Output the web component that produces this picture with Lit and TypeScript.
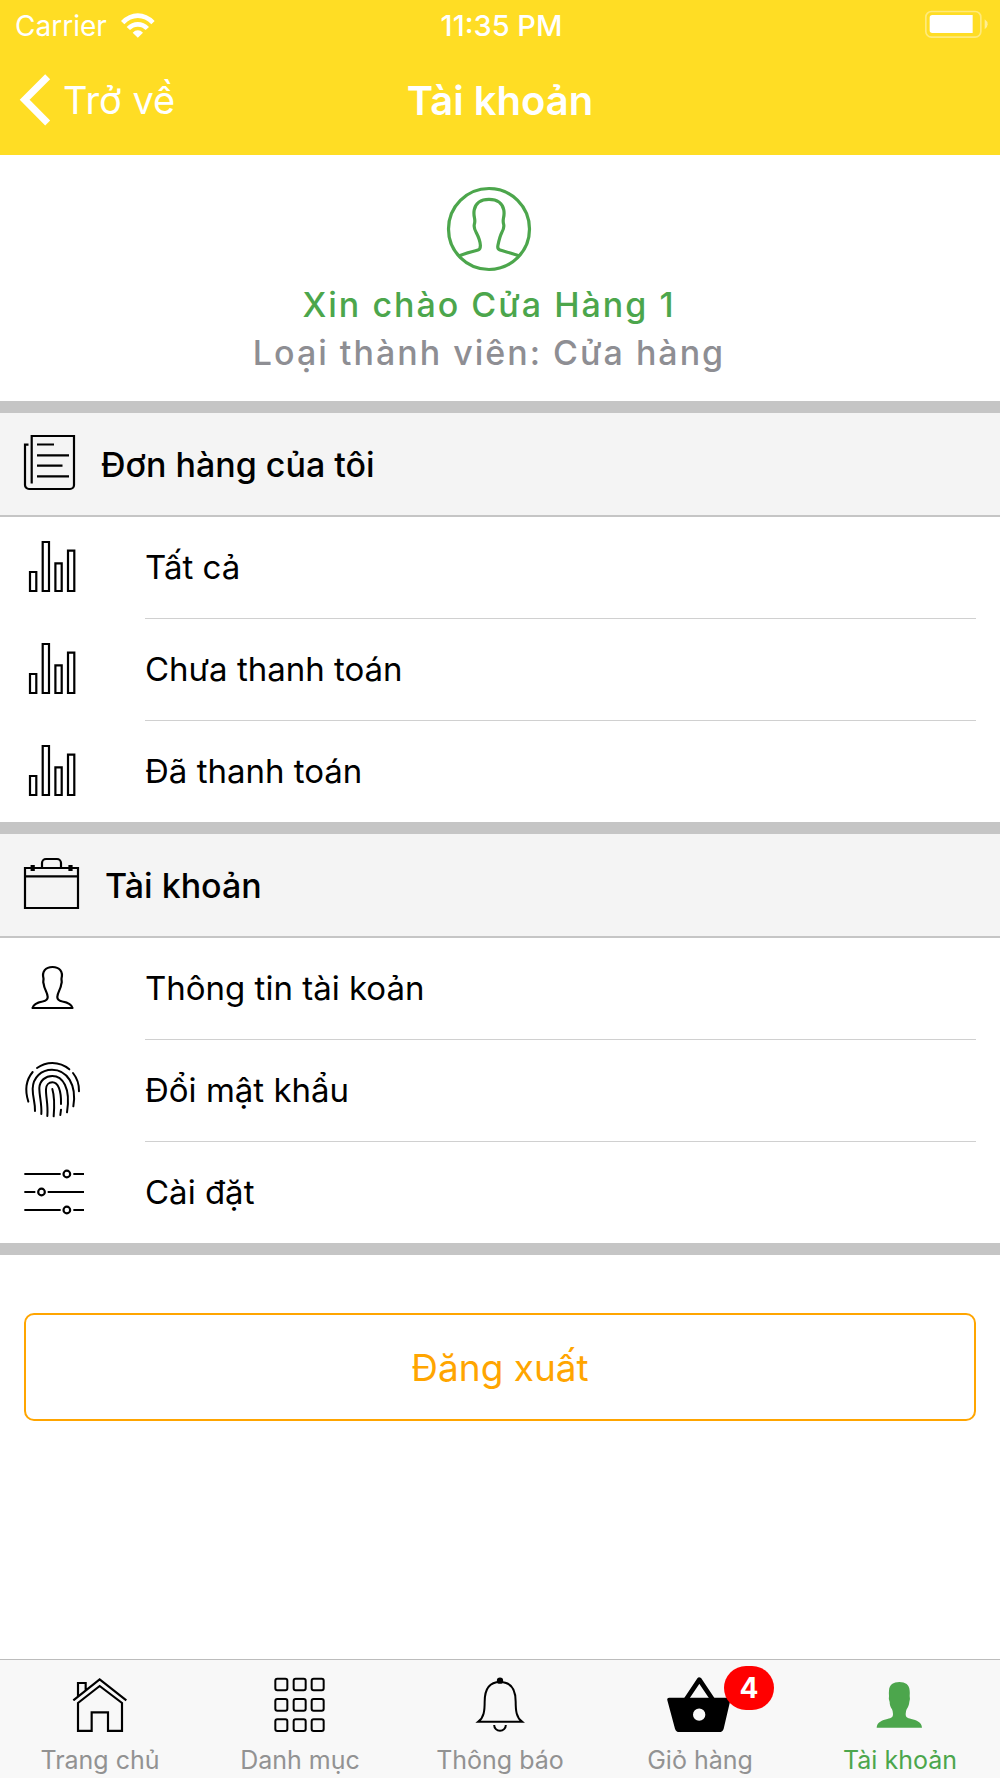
import { LitElement, html, css, svg, type TemplateResult } from "lit";
import { customElement, property } from "lit/decorators.js";

type IconName =
  | "avatar" | "orders" | "bars" | "briefcase" | "person" | "fingerprint" | "sliders"
  | "home" | "grid" | "bell" | "basket" | "personFilled" | "wifi" | "battery" | "chevron";

interface IconDef {
  width: number;
  height: number;
  box: string;
  body: TemplateResult;
}

const gridCells = [113, 174, 235].flatMap((y) => [823, 878, 932].map((x) => ({ x, y })));

const ICONS: Record<IconName, IconDef> = {
  avatar: {
    width: 84, height: 84, box: "0 0 84 84",
    body: svg`<g fill="none" stroke="currentColor" stroke-width="3.200">
      <circle cx="42" cy="42" r="40.5"/>
      <path stroke-linejoin="round" d="M12.500 68.800C18 66 25.500 64.800 31 63C33 62.300 33.400 61 33.400 58.500C33.200 53 31 49 29.200 45.500C27.500 42.500 26.800 40 27.300 37.500C28.100 35 28 33.500 27.500 31C26.900 28.500 26.700 26 27.200 23C28.300 16.500 33.500 12.300 42 12.300C50.500 12.300 55.700 16.500 56.800 23C57.300 26 57.100 28.500 56.500 31C56 33.500 55.900 35 56.700 37.500C57.200 40 56.500 42.500 54.800 45.500C53 49 51.800 54 50.900 58.500C50.400 61 51 62.300 53 63C58.500 64.800 66 66.500 71.500 68.800"/>
    </g>`,
  },
  orders: {
    width: 51, height: 55, box: "0 0 51 55",
    body: svg`<path fill="none" stroke="currentColor" stroke-width="2.200" d="M7.700 48.500V1H50V50a4 4 0 0 1-4 4H5a4 4 0 0 1-4-4V9.700H4.500M13 9.500H30M13 20.300H45M13 30.700H38.500M13 41.300H45"/>`,
  },
  bars: {
    width: 47, height: 51, box: "0 0 47 51",
    body: svg`<path fill="none" stroke="currentColor" stroke-width="2.200" d="M1 31H7.300V50H1ZM13.700 1H20V50H13.700ZM26.400 22.300H32.700V50H26.400ZM39 9.700H45.300V50H39Z"/>`,
  },
  briefcase: {
    width: 55, height: 51, box: "0 0 55 51",
    body: svg`<path fill="none" stroke="currentColor" stroke-width="2.200" d="M1 10H54V50H1ZM1 18.300H54M18 10V5a4 4 0 0 1 4-4H33a4 4 0 0 1 4 4V10"/>
      <path fill="currentColor" d="M6.600 7H10.800V13H6.600ZM44.400 7H48.600V13H44.400Z"/>`,
  },
  person: {
    width: 43, height: 43, box: "0 0 43 43",
    body: svg`<path fill="none" stroke="currentColor" stroke-width="2.200" stroke-linejoin="round" d="M1.500 42H41.500C40.500 38 35.500 36.200 31.500 35.500C28 34.800 26.300 34 26.300 31C26.300 26.500 30 23 30.300 18C31.400 15.500 30.300 15 30.500 12.500C32.300 5.500 28.500 1 21.500 1C14.500 1 10.700 5.500 12.500 12.500C12.700 15 11.600 15.500 12.700 18C13 23 16.700 26.500 16.700 31C16.700 34 15 34.800 11.500 35.500C7.500 36.200 2.500 38 1.500 42Z"/>`,
  },
  fingerprint: {
    width: 57, height: 57, box: "72 121 171 171",
    body: svg`<g fill="none" stroke="currentColor" stroke-width="6" stroke-linecap="round">
      <path d="M111 142Q132 127 157 127Q186 127 208 146"/>
      <path d="M98 154Q68 190 85 243"/>
      <path d="M219 157Q238 181 237 212"/>
      <path d="M105 271C106 246 98 232 98 204C99 170 124 147 156 147C201 147 231 192 220 257"/>
      <path d="M124 280C126 250 118 228 118 202C119 179 137 166 157 166C187 166 213 200 201 275"/>
      <path d="M142 286C145 250 137 228 138 206C138 192 147 185 157 185C174 185 184 208 183 250"/>
      <path d="M183 267L181 283"/>
      <path d="M157 205C163 225 164 250 161 287"/>
    </g>`,
  },
  sliders: {
    width: 60, height: 46, box: "68 442 180 138",
    body: svg`<g fill="none" stroke="currentColor" stroke-width="6.500">
      <path d="M72 457H181M219 457H251M72 511H105M142 511H251M72 565H181M219 565H251"/>
      <circle cx="199.500" cy="457" r="10"/><circle cx="123.500" cy="511" r="10"/><circle cx="199.500" cy="565" r="10"/>
    </g>`,
  },
  home: {
    width: 56, height: 56, box: "216 111 168 168",
    body: svg`<path fill="none" stroke="currentColor" stroke-width="6.500" d="M220 181L299 118L379 181M234 272.500V189L299 138L366 189V272.500H324V217H275V272.500ZM234 168V129H257V149"/>`,
  },
  grid: {
    width: 56, height: 56, box: "816 111 168 168",
    body: svg`<g fill="none" stroke="currentColor" stroke-width="6">
      ${gridCells.map(({ x, y }) => svg`<rect x=${x + 3} y=${y + 3} width="36" height="35" rx="6"/>`)}
    </g>`,
  },
  bell: {
    width: 56, height: 56, box: "216 111 168 168",
    body: svg`<path fill="none" stroke="currentColor" stroke-width="6" d="M235 245C252 232 254 212 254 185C254 146 270 126 300 126C330 126 347 146 347 185C347 212 349 232 366 245Z"/>
      <circle cx="300" cy="122" r="9.500" fill="currentColor"/>
      <path fill="none" stroke="currentColor" stroke-width="6" d="M282.500 255a17.500 17.500 0 0 0 35 0"/>`,
  },
  basket: {
    width: 66, height: 56, box: "81 111 198 168",
    body: svg`<path fill="currentColor" fill-rule="evenodd" d="M88 173H265Q273 173 271 181L251 266Q248 276 238 276H118Q108 276 105 266L82 181Q80 173 88 173ZM159 224a18.500 18.500 0 1 0 37 0a18.500 18.500 0 1 0-37 0Z"/>
      <path fill="none" stroke="currentColor" stroke-width="14" stroke-linejoin="round" d="M137 180L178 119L219 180"/>`,
  },
  personFilled: {
    width: 56, height: 56, box: "696 111 168 168",
    body: svg`<path fill="currentColor" d="M710 263C711 246 727 241 742 237C755 234 759 231 759 222Q759 214 756 208C751 200 749 195 749 186Q745 176 747 168Q746 160 747 152C748 134 760 126 778 126C796 126 808 134 809 152Q810 160 809 168Q811 176 808 186C807 195 805 200 800 208Q797 214 797 222C797 231 801 234 814 237C829 241 845 246 846 263Z"/>`,
  },
  wifi: {
    width: 34, height: 26, box: "363 35 102 78",
    body: svg`<path fill="currentColor" d="M363 59Q386 36 413.500 36Q441 36 464 59L454 69Q436 50 413.500 50Q391 50 373 69ZM380 77Q395 62 413.500 62Q432 62 447 77L437 86Q427 76 413.500 76Q400 76 390 86ZM398 94Q405 87 413.500 87Q422 87 429 94L413.500 109Z"/>`,
  },
  battery: {
    width: 63, height: 27, box: "1276 33 189 81",
    body: svg`<rect x="1278.500" y="34.500" width="165" height="77" rx="17" fill="none" stroke="#fff" stroke-opacity=".4" stroke-width="5"/>
      <path fill="#fff" d="M1296 45H1419V99H1298Q1290 99 1290 91V53Q1290 45 1298 45Z"/>
      <path fill="#fff" fill-opacity=".5" d="M1455 58Q1464 64 1464 73Q1464 82 1455 88Z"/>`,
  },
  chevron: {
    width: 30, height: 52, box: "60 219 90 156",
    body: svg`<path fill="none" stroke="currentColor" stroke-width="21" d="M143 227L74 296.500L143 366"/>`,
  },
};

@customElement("app-icon")
export class AppIcon extends LitElement {
  static styles = css`
    :host { display: inline-flex; flex: none; }
    .glyph { display: block; overflow: visible; }
  `;

  @property() name: IconName = "home";

  render() {
    const icon = ICONS[this.name];
    return html`<svg class="glyph" width=${icon.width} height=${icon.height} viewBox=${icon.box} aria-hidden="true">${icon.body}</svg>`;
  }
}

interface Entry { icon: IconName; label: string; }
interface Section extends Entry { entries: Entry[]; }
interface Tab extends Entry { badge?: number; active?: boolean; }

const SECTIONS: Section[] = [
  {
    icon: "orders", label: "Đơn hàng của tôi",
    entries: [
      { icon: "bars", label: "Tất cả" },
      { icon: "bars", label: "Chưa thanh toán" },
      { icon: "bars", label: "Đã thanh toán" },
    ],
  },
  {
    icon: "briefcase", label: "Tài khoản",
    entries: [
      { icon: "person", label: "Thông tin tài koản" },
      { icon: "fingerprint", label: "Đổi mật khẩu" },
      { icon: "sliders", label: "Cài đặt" },
    ],
  },
];

const TABS: Tab[] = [
  { icon: "home", label: "Trang chủ" },
  { icon: "grid", label: "Danh mục" },
  { icon: "bell", label: "Thông báo" },
  { icon: "basket", label: "Giỏ hàng", badge: 4 },
  { icon: "personFilled", label: "Tài khoản", active: true },
];

@customElement("app-root")
export class AppRoot extends LitElement {
  static styles = css`
    :host {
      display: flex;
      flex-direction: column;
      min-height: 100vh;
      background: #fff;
      color: #000;
      font-family: Inter, "Liberation Sans", sans-serif;
      font-size: 33px;
    }
    * { box-sizing: border-box; }
    h1, h2, p, ul { margin: 0; padding: 0; font: inherit; }
    ul { list-style: none; }
    a { color: inherit; text-decoration: none; }
    button { font: inherit; cursor: pointer; }

    .top { background: #ffdd24; color: #fff; padding-bottom: 6px; }
    .status, .nav { display: grid; grid-template-columns: 1fr auto 1fr; align-items: center; }
    .status { height: 51px; padding: 0 12px 0 15px; font-size: 28px; }
    .carrier { display: flex; align-items: center; gap: 14px; }
    .time { font-size: 29px; font-weight: 500; }
    .battery { justify-self: end; margin-bottom: 2px; }
    .nav { height: 98px; padding: 0 20px; font-size: 40px; }
    .back {
      justify-self: start; display: flex; align-items: center; gap: 13px;
      padding: 0; border: 0; background: none; color: inherit; font-size: 38px;
    }
    .title { font-weight: 600; }

    .profile {
      display: flex; flex-direction: column; align-items: center;
      padding: 32px 22px 24px 0; font-size: 34px; letter-spacing: 2px; line-height: 48px;
    }
    .avatar { color: #4ca64c; margin-bottom: 10px; }
    .hello { color: #4ca64c; font-weight: 500; }
    .member { color: #8e8e93; font-weight: 500; }

    .section { border-top: 12px solid #c5c5c5; }
    .section:last-of-type { border-bottom: 12px solid #c5c5c5; }
    .heading {
      display: flex; align-items: center; gap: 26px; height: 104px; padding: 0 24px;
      background: #f4f4f4; border-bottom: 2px solid #c5c5c5;
    }
    .heading-icon { margin-bottom: 4px; }
    .heading-text { font-size: 34px; font-weight: 500; }
    .row { display: flex; align-items: stretch; padding: 0 24px; }
    .slot, .label { display: flex; align-items: center; height: 101px; padding-bottom: 2px; }
    .slot { justify-content: center; width: 57px; margin-right: 64px; }
    .label { flex: 1; }
    .item + .item { margin-top: 1px; }
    .item + .item .label { box-shadow: 0 -1px #d0d0d0; }

    .actions { flex: 1; padding: 58px 24px; }
    .logout {
      display: block; width: 100%; height: 108px; padding-top: 2px; border: 2px solid #ffa500; border-radius: 10px;
      background: #fff; color: #ffa500; font-size: 37px;
    }

    .tabs { display: grid; grid-template-columns: repeat(5, 1fr); background: #f8f8f8; border-top: 1px solid #bcbcbc; }
    .tab { display: flex; flex-direction: column; align-items: center; gap: 12px; padding: 17px 0 3px; font-size: 25px; line-height: 30px; }
    .tab-icon { position: relative; display: flex; color: #000; }
    .tab-label { color: #929292; }
    .active .tab-icon, .active .tab-label { color: #4ca64c; }
    .badge {
      position: absolute; left: 57px; top: -11px; width: 50px; height: 44px; border-radius: 22px;
      background: #f00; color: #fff; font-size: 28px; font-weight: 700; line-height: 44px; text-align: center;
    }
  `;

  render() {
    return html`
      <header class="top">
        <div class="status">
          <span class="carrier">Carrier <app-icon name="wifi"></app-icon></span>
          <span class="time">11:35 PM</span>
          <app-icon class="battery" name="battery"></app-icon>
        </div>
        <div class="nav">
          <button class="back"><app-icon name="chevron"></app-icon>Trở về</button>
          <h1 class="title">Tài khoản</h1>
        </div>
      </header>

      <div class="profile">
        <app-icon class="avatar" name="avatar"></app-icon>
        <p class="hello">Xin chào Cửa Hàng 1</p>
        <p class="member">Loại thành viên: Cửa hàng</p>
      </div>

      ${SECTIONS.map((section) => html`
        <section class="section">
          <div class="heading">
            <app-icon class="heading-icon" name=${section.icon}></app-icon>
            <h2 class="heading-text">${section.label}</h2>
          </div>
          <ul>
            ${section.entries.map((entry) => html`
              <li class="item">
                <a class="row" href="#">
                  <span class="slot"><app-icon name=${entry.icon}></app-icon></span>
                  <span class="label">${entry.label}</span>
                </a>
              </li>`)}
          </ul>
        </section>`)}

      <div class="actions"><button class="logout">Đăng xuất</button></div>

      <nav class="tabs">
        ${TABS.map((tab) => html`
          <a class="tab ${tab.active ? "active" : ""}" href="#">
            <span class="tab-icon">
              <app-icon name=${tab.icon}></app-icon>
              ${tab.badge ? html`<span class="badge">${tab.badge}</span>` : null}
            </span>
            <span class="tab-label">${tab.label}</span>
          </a>`)}
      </nav>
    `;
  }
}
